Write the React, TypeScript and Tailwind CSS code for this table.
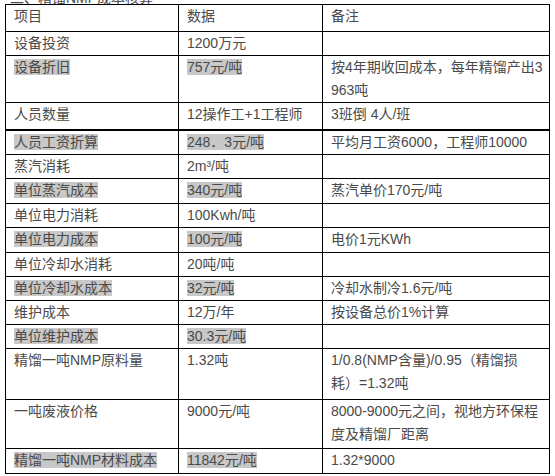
import React from 'react'

type Row = {
  item: string
  data: string
  note?: React.ReactNode
  mark?: boolean
  h: number
  thick?: boolean
}

const rows: Row[] = [
  { item: '设备投资', data: '1200万元', h: 24 },
  {
    item: '设备折旧',
    data: '757元/吨',
    note: (
      <>
        按4年期收回成本，每年精馏产出3
        <br />
        963吨
      </>
    ),
    mark: true,
    h: 45,
  },
  { item: '人员数量', data: '12操作工+1工程师', note: '3班倒 4人/班', h: 27, thick: true },
  { item: '人员工资折算', data: '248．3元/吨', note: '平均月工资6000，工程师10000', mark: true, h: 24 },
  { item: '蒸汽消耗', data: '2m³/吨', h: 24 },
  { item: '单位蒸汽成本', data: '340元/吨', note: '蒸汽单价170元/吨', mark: true, h: 25 },
  { item: '单位电力消耗', data: '100Kwh/吨', h: 24 },
  { item: '单位电力成本', data: '100元/吨', note: '电价1元KWh', mark: true, h: 25 },
  { item: '单位冷却水消耗', data: '20吨/吨', h: 24 },
  { item: '单位冷却水成本', data: '32元/吨', note: '冷却水制冷1.6元/吨', mark: true, h: 24 },
  { item: '维护成本', data: '12万/年', note: '按设备总价1%计算', h: 24 },
  { item: '单位维护成本', data: '30.3元/吨', mark: true, h: 24 },
  {
    item: '精馏一吨NMP原料量',
    data: '1.32吨',
    note: (
      <>
        1/0.8(NMP含量)/0.95（精馏损
        <br />
        耗）=1.32吨
      </>
    ),
    h: 51,
  },
  {
    item: '一吨废液价格',
    data: '9000元/吨',
    note: (
      <>
        8000-9000元之间，视地方环保程
        <br />
        度及精馏厂距离
      </>
    ),
    h: 49,
  },
  { item: '精馏一吨NMP材料成本', data: '11842元/吨', note: '1.32*9000', mark: true, h: 25 },
]

function Cell({ children, mark }: { children?: React.ReactNode; mark?: boolean }) {
  return (
    <td className="border border-black align-top px-[8px] pt-0 whitespace-nowrap leading-[23px]">
      {mark ? <span className="bg-[#c8c8c8]">{children}</span> : children}
    </td>
  )
}

export default function App() {
  return (
    <div
      className="w-[555px] h-[476px] bg-white text-[14px] text-[#4a4a4a] overflow-hidden"
      style={{ fontFamily: '"Liberation Sans", "Noto Sans CJK SC", sans-serif' }}
    >
      <div className="h-[4px] overflow-hidden pl-[10px]">
        <div className="leading-[14px] -mt-[9px]">二、精馏NMP成本核算</div>
      </div>
      <table className="ml-[5px] w-[544px] table-fixed border-collapse">
        <colgroup>
          <col className="w-[173px]" />
          <col className="w-[144px]" />
          <col className="w-[227px]" />
        </colgroup>
        <tbody>
          <tr className="h-[27px]">
            <Cell>项目</Cell>
            <Cell>数据</Cell>
            <Cell>备注</Cell>
          </tr>
          {rows.map((r) => (
            <tr
              key={r.item}
              style={{ height: r.h }}
              className={r.thick ? '[&>td]:border-b-2' : ''}
            >
              <Cell mark={r.mark}>{r.item}</Cell>
              <Cell mark={r.mark}>{r.data}</Cell>
              <Cell>{r.note}</Cell>
            </tr>
          ))}
        </tbody>
      </table>
    </div>
  )
}
